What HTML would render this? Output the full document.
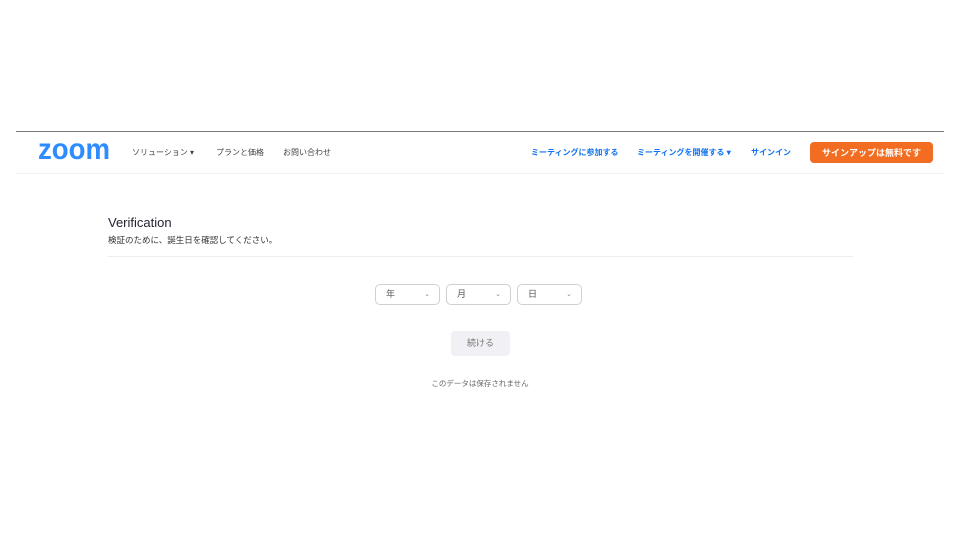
<!DOCTYPE html>
<html><head><meta charset="utf-8"><style>
*{margin:0;padding:0;box-sizing:border-box}
body{width:960px;height:540px;background:#fff;position:relative;overflow:hidden;font-family:"Liberation Sans","Noto Sans CJK JP",sans-serif}
.a{position:absolute;white-space:nowrap}
.topline{left:16px;top:131px;width:928px;height:1px;background:#777}
.hdrline{left:16px;top:173px;width:928px;height:1px;background:#f2f2f4}
.logo{left:38px;top:135px;font-size:30px;line-height:1;font-weight:bold;color:#2d8cff;transform:scaleX(0.92);transform-origin:left top}
.nav{font-size:8px;color:#444;top:147px}
.blue{color:#0e72ed;font-weight:bold}
.btn{left:810px;top:142px;width:123px;height:21px;background:#f26d21;border-radius:4px;color:#fff;font-size:9px;font-weight:bold;display:flex;align-items:center;justify-content:center}
.sel{top:284px;height:21px;border:1px solid #cfcfd6;border-radius:5px;font-size:9px;color:#555;line-height:19px;padding-left:10px}
.sel span{position:absolute;right:9px;top:0;font-size:7px;color:#888}
</style></head><body>
<div class="a topline"></div>
<div class="a logo">zoom</div>
<div class="a nav" style="left:132px">ソリューション ▾</div>
<div class="a nav" style="left:216px">プランと価格</div>
<div class="a nav" style="left:283px">お問い合わせ</div>
<div class="a nav blue" style="left:531px">ミーティングに参加する</div>
<div class="a nav blue" style="left:637px">ミーティングを開催する ▾</div>
<div class="a nav blue" style="left:751px">サインイン</div>
<div class="a btn">サインアップは無料です</div>
<div class="a hdrline"></div>
<div class="a" style="left:108px;top:215px;font-size:13px;color:#232333">Verification</div>
<div class="a" style="left:108px;top:234px;font-size:8.5px;color:#333">検証のために、誕生日を確認してください。</div>
<div class="a" style="left:108px;top:256px;width:745px;height:1px;background:#ededf0"></div>
<div class="a sel" style="left:375px;width:65px">年<span>⌄</span></div>
<div class="a sel" style="left:446px;width:65px">月<span>⌄</span></div>
<div class="a sel" style="left:517px;width:65px">日<span>⌄</span></div>
<div class="a" style="left:451px;top:331px;width:59px;height:25px;background:#f1f1f5;border-radius:4px;font-size:9px;color:#777;text-align:center;line-height:25px">続ける</div>
<div class="a" style="left:380px;top:378px;width:200px;text-align:center;font-size:7.5px;color:#666">このデータは保存されません</div>
</body></html>
